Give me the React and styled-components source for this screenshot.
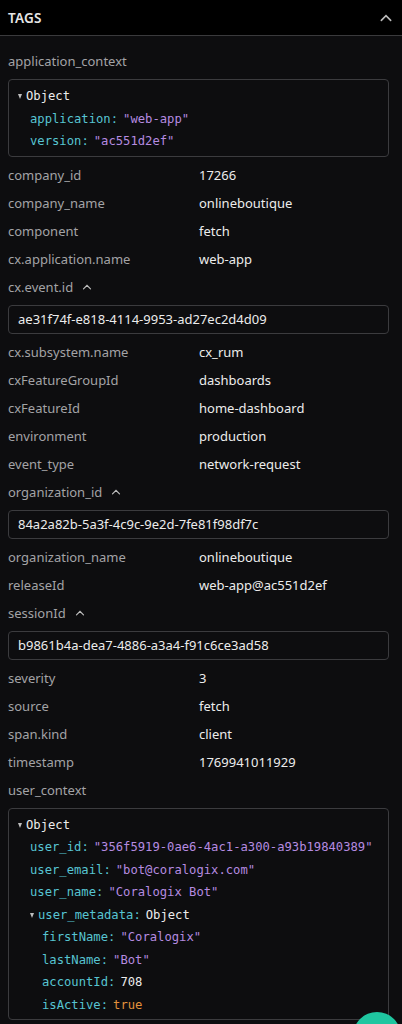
import styled, { createGlobalStyle } from "styled-components";

const GlobalStyle = createGlobalStyle`
  html, body {
    margin: 0;
    padding: 0;
    background: #0d0d0f;
  }
  body {
    font-family: "Noto Sans", "Open Sans", sans-serif;
    -webkit-font-smoothing: antialiased;
  }
`;

const Panel = styled.div`
  width: 402px;
  height: 1024px;
  overflow: hidden;
  background: #0d0d0f;
  position: relative;
`;

const Header = styled.div`
  height: 36px;
  background: #000;
  border-bottom: 1px solid #3a3a3c;
  display: flex;
  align-items: center;
  justify-content: space-between;
  padding: 0 8px 0 8px;
  box-sizing: border-box;
`;

const Title = styled.span`
  font-size: 13.5px;
  font-weight: 600;
  color: #e6e6e6;
  letter-spacing: 0.2px;
`;

const Body = styled.div`
  padding: 11px 13px 0 8px;
`;

const Row = styled.div`
  height: 28px;
  display: grid;
  grid-template-columns: 191px 1fr;
  align-items: center;
  font-size: 13px;
`;

const Key = styled.span`
  color: #a3a3a6;
  display: flex;
  align-items: center;
  gap: 8px;
`;

const Value = styled.span`
  color: #ececec;
`;

const Box = styled.div`
  border: 1px solid #3b3b3e;
  border-radius: 4px;
  margin: 4px 0;
  box-sizing: border-box;
`;

const IdBox = styled(Box)`
  height: 29px;
  display: flex;
  align-items: center;
  padding: 0 9px;
  font-size: 13px;
  color: #ececec;
`;

const JsonBox = styled(Box)`
  padding: 5px 0 3px 9px;
  font-family: "DejaVu Sans Mono", "Liberation Mono", monospace;
  font-size: 12.2px;
`;

const Line = styled.div`
  height: 22.5px;
  display: flex;
  align-items: center;
  padding-left: ${(p) => p.$depth * 12}px;
  white-space: nowrap;
`;

const Caret = styled.span`
  width: 0;
  height: 0;
  border-left: 2.5px solid transparent;
  border-right: 2.5px solid transparent;
  border-top: 5px solid #bdbdbd;
  margin: 1px 4px 0 0;
`;

const JKey = styled.span`
  color: #57c4d2;
  margin-right: 5px;
`;

const JVal = styled.span`
  color: ${(p) =>
    p.$type === "string" ? "#b58be0" : p.$type === "bool" ? "#e3923c" : "#ececec"};
`;

const Fab = styled.div`
  position: absolute;
  left: 353px;
  top: 1012px;
  width: 48px;
  height: 48px;
  border-radius: 50%;
  background: #1fc6a0;
`;

const Chevron = ({ size = 12, color = "#bdbdbd" }) => (
  <svg width={size} height={size} viewBox="0 0 12 12" fill="none">
    <path d="M2.5 7.8L6 4.3l3.5 3.5" stroke={color} strokeWidth="1.2" strokeLinecap="round" />
  </svg>
);

const JsonLine = ({ depth, k, v, type, open }) => (
  <Line $depth={depth}>
    {open && <Caret />}
    {k && <JKey>{k}:</JKey>}
    <JVal $type={type}>{type === "string" ? `"${v}"` : v}</JVal>
  </Line>
);

const tags = [
  { k: "company_id", v: "17266" },
  { k: "company_name", v: "onlineboutique" },
  { k: "component", v: "fetch" },
  { k: "cx.application.name", v: "web-app" },
  { k: "cx.event.id", box: "ae31f74f-e818-4114-9953-ad27ec2d4d09" },
  { k: "cx.subsystem.name", v: "cx_rum" },
  { k: "cxFeatureGroupId", v: "dashboards" },
  { k: "cxFeatureId", v: "home-dashboard" },
  { k: "environment", v: "production" },
  { k: "event_type", v: "network-request" },
  { k: "organization_id", box: "84a2a82b-5a3f-4c9c-9e2d-7fe81f98df7c" },
  { k: "organization_name", v: "onlineboutique" },
  { k: "releaseId", v: "web-app@ac551d2ef" },
  { k: "sessionId", box: "b9861b4a-dea7-4886-a3a4-f91c6ce3ad58" },
  { k: "severity", v: "3" },
  { k: "source", v: "fetch" },
  { k: "span.kind", v: "client" },
  { k: "timestamp", v: "1769941011929" },
];

export default function App() {
  return (
    <Panel>
      <GlobalStyle />
      <Header>
        <Title>TAGS</Title>
        <Chevron size={16} />
      </Header>
      <Body>
        <Row>
          <Key>application_context</Key>
        </Row>
        <JsonBox>
          <JsonLine depth={0} open v="Object" />
          <JsonLine depth={1} k="application" v="web-app" type="string" />
          <JsonLine depth={1} k="version" v="ac551d2ef" type="string" />
        </JsonBox>
        {tags.map((t) =>
          t.box ? (
            <div key={t.k}>
              <Row>
                <Key>
                  {t.k}
                  <Chevron />
                </Key>
              </Row>
              <IdBox>{t.box}</IdBox>
            </div>
          ) : (
            <Row key={t.k}>
              <Key>{t.k}</Key>
              <Value>{t.v}</Value>
            </Row>
          )
        )}
        <Row>
          <Key>user_context</Key>
        </Row>
        <JsonBox>
          <JsonLine depth={0} open v="Object" />
          <JsonLine depth={1} k="user_id" v="356f5919-0ae6-4ac1-a300-a93b19840389" type="string" />
          <JsonLine depth={1} k="user_email" v="bot@coralogix.com" type="string" />
          <JsonLine depth={1} k="user_name" v="Coralogix Bot" type="string" />
          <Line $depth={1}>
            <Caret />
            <JKey>user_metadata:</JKey>
            <JVal>Object</JVal>
          </Line>
          <JsonLine depth={2} k="firstName" v="Coralogix" type="string" />
          <JsonLine depth={2} k="lastName" v="Bot" type="string" />
          <JsonLine depth={2} k="accountId" v="708" />
          <JsonLine depth={2} k="isActive" v="true" type="bool" />
        </JsonBox>
      </Body>
      <Fab />
    </Panel>
  );
}
